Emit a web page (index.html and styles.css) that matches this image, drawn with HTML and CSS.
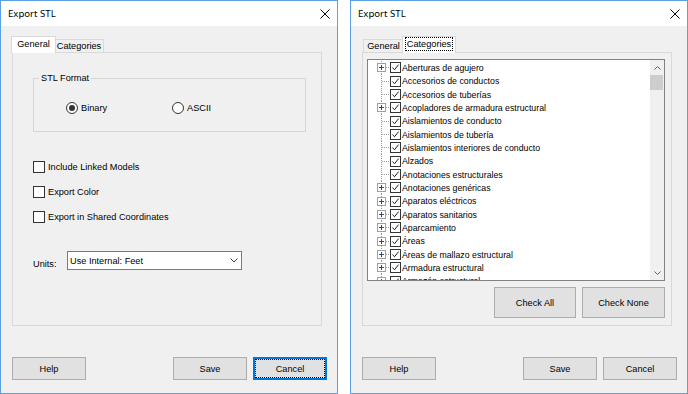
FILE: index.html
```html
<!DOCTYPE html>
<html>
<head>
<meta charset="utf-8">
<title>Export STL</title>
<link rel="stylesheet" href="styles.css">
</head>
<body>
<div class="desk">
  <div class="dialog">
    <div class="titlebar">
      <span class="title">Export STL</span>
      <svg class="close" width="10" height="10" viewBox="0 0 10 10"><path d="M0.5 0.5L9.5 9.5M9.5 0.5L0.5 9.5" stroke="#000" stroke-width="1" fill="none"/></svg>
    </div>
    <div class="body">
      <div class="tabs">
        <div class="tab tab-general active">General</div>
        <div class="tab tab-cat">Categories</div>
      </div>
      <div class="panel">
        <fieldset class="group">
          <legend>STL Format</legend>
          <div class="radios">
            <label class="radio"><span class="rb on"></span>Binary</label>
            <label class="radio"><span class="rb"></span>ASCII</label>
          </div>
        </fieldset>
        <div class="checks">
          <label class="check"><span class="cb"></span>Include Linked Models</label>
          <label class="check"><span class="cb"></span>Export Color</label>
          <label class="check"><span class="cb"></span>Export in Shared Coordinates</label>
        </div>
        <div class="units">
          <span class="units-label">Units:</span>
          <div class="select">
            <span>Use Internal: Feet</span>
            <svg class="chev" width="8" height="5" viewBox="0 0 8 5"><polyline points="0.5,0.5 4,4 7.5,0.5" stroke="#444" fill="none"/></svg>
          </div>
        </div>
      </div>
      <div class="buttons">
        <button class="btn btn-help">Help</button>
        <button class="btn">Save</button>
        <button class="btn default">Cancel</button>
      </div>
    </div>
  </div>

  <div class="dialog">
    <div class="titlebar">
      <span class="title">Export STL</span>
      <svg class="close" width="10" height="10" viewBox="0 0 10 10"><path d="M0.5 0.5L9.5 9.5M9.5 0.5L0.5 9.5" stroke="#000" stroke-width="1" fill="none"/></svg>
    </div>
    <div class="body">
      <div class="tabs">
        <div class="tab tab-general">General</div>
        <div class="tab tab-cat active"><span class="focus">Categories</span></div>
      </div>
      <div class="panel">
        <div class="list">
          <div class="tree">
            <div class="row"><span class="gutter"><svg class="exp" width="9" height="9" viewBox="0 0 9 9"><rect x="0.5" y="0.5" width="8" height="8" fill="#fff" stroke="#a0a0a0"/><path d="M2 4.5H7M4.5 2V7" stroke="#34458c"/></svg><span class="hline short"></span></span><svg class="tcb" width="11" height="11" viewBox="0 0 11 11"><rect x="0.5" y="0.5" width="10" height="10" fill="#fff" stroke="#333"/><polyline points="2.5,5.5 4.5,7.8 8.6,2.6" fill="none" stroke="#222"/></svg><span class="txt">Aberturas de agujero</span></div>
            <div class="row"><span class="gutter"><span class="hline"></span></span><svg class="tcb" width="11" height="11" viewBox="0 0 11 11"><rect x="0.5" y="0.5" width="10" height="10" fill="#fff" stroke="#333"/><polyline points="2.5,5.5 4.5,7.8 8.6,2.6" fill="none" stroke="#222"/></svg><span class="txt">Accesorios de conductos</span></div>
            <div class="row"><span class="gutter"><span class="hline"></span></span><svg class="tcb" width="11" height="11" viewBox="0 0 11 11"><rect x="0.5" y="0.5" width="10" height="10" fill="#fff" stroke="#333"/><polyline points="2.5,5.5 4.5,7.8 8.6,2.6" fill="none" stroke="#222"/></svg><span class="txt">Accesorios de tuberías</span></div>
            <div class="row"><span class="gutter"><svg class="exp" width="9" height="9" viewBox="0 0 9 9"><rect x="0.5" y="0.5" width="8" height="8" fill="#fff" stroke="#a0a0a0"/><path d="M2 4.5H7M4.5 2V7" stroke="#34458c"/></svg><span class="hline short"></span></span><svg class="tcb" width="11" height="11" viewBox="0 0 11 11"><rect x="0.5" y="0.5" width="10" height="10" fill="#fff" stroke="#333"/><polyline points="2.5,5.5 4.5,7.8 8.6,2.6" fill="none" stroke="#222"/></svg><span class="txt">Acopladores de armadura estructural</span></div>
            <div class="row"><span class="gutter"><span class="hline"></span></span><svg class="tcb" width="11" height="11" viewBox="0 0 11 11"><rect x="0.5" y="0.5" width="10" height="10" fill="#fff" stroke="#333"/><polyline points="2.5,5.5 4.5,7.8 8.6,2.6" fill="none" stroke="#222"/></svg><span class="txt">Aislamientos de conducto</span></div>
            <div class="row"><span class="gutter"><span class="hline"></span></span><svg class="tcb" width="11" height="11" viewBox="0 0 11 11"><rect x="0.5" y="0.5" width="10" height="10" fill="#fff" stroke="#333"/><polyline points="2.5,5.5 4.5,7.8 8.6,2.6" fill="none" stroke="#222"/></svg><span class="txt">Aislamientos de tubería</span></div>
            <div class="row"><span class="gutter"><span class="hline"></span></span><svg class="tcb" width="11" height="11" viewBox="0 0 11 11"><rect x="0.5" y="0.5" width="10" height="10" fill="#fff" stroke="#333"/><polyline points="2.5,5.5 4.5,7.8 8.6,2.6" fill="none" stroke="#222"/></svg><span class="txt">Aislamientos interiores de conducto</span></div>
            <div class="row"><span class="gutter"><span class="hline"></span></span><svg class="tcb" width="11" height="11" viewBox="0 0 11 11"><rect x="0.5" y="0.5" width="10" height="10" fill="#fff" stroke="#333"/><polyline points="2.5,5.5 4.5,7.8 8.6,2.6" fill="none" stroke="#222"/></svg><span class="txt">Alzados</span></div>
            <div class="row"><span class="gutter"><span class="hline"></span></span><svg class="tcb" width="11" height="11" viewBox="0 0 11 11"><rect x="0.5" y="0.5" width="10" height="10" fill="#fff" stroke="#333"/><polyline points="2.5,5.5 4.5,7.8 8.6,2.6" fill="none" stroke="#222"/></svg><span class="txt">Anotaciones estructurales</span></div>
            <div class="row"><span class="gutter"><svg class="exp" width="9" height="9" viewBox="0 0 9 9"><rect x="0.5" y="0.5" width="8" height="8" fill="#fff" stroke="#a0a0a0"/><path d="M2 4.5H7M4.5 2V7" stroke="#34458c"/></svg><span class="hline short"></span></span><svg class="tcb" width="11" height="11" viewBox="0 0 11 11"><rect x="0.5" y="0.5" width="10" height="10" fill="#fff" stroke="#333"/><polyline points="2.5,5.5 4.5,7.8 8.6,2.6" fill="none" stroke="#222"/></svg><span class="txt">Anotaciones genéricas</span></div>
            <div class="row"><span class="gutter"><svg class="exp" width="9" height="9" viewBox="0 0 9 9"><rect x="0.5" y="0.5" width="8" height="8" fill="#fff" stroke="#a0a0a0"/><path d="M2 4.5H7M4.5 2V7" stroke="#34458c"/></svg><span class="hline short"></span></span><svg class="tcb" width="11" height="11" viewBox="0 0 11 11"><rect x="0.5" y="0.5" width="10" height="10" fill="#fff" stroke="#333"/><polyline points="2.5,5.5 4.5,7.8 8.6,2.6" fill="none" stroke="#222"/></svg><span class="txt">Aparatos eléctricos</span></div>
            <div class="row"><span class="gutter"><svg class="exp" width="9" height="9" viewBox="0 0 9 9"><rect x="0.5" y="0.5" width="8" height="8" fill="#fff" stroke="#a0a0a0"/><path d="M2 4.5H7M4.5 2V7" stroke="#34458c"/></svg><span class="hline short"></span></span><svg class="tcb" width="11" height="11" viewBox="0 0 11 11"><rect x="0.5" y="0.5" width="10" height="10" fill="#fff" stroke="#333"/><polyline points="2.5,5.5 4.5,7.8 8.6,2.6" fill="none" stroke="#222"/></svg><span class="txt">Aparatos sanitarios</span></div>
            <div class="row"><span class="gutter"><svg class="exp" width="9" height="9" viewBox="0 0 9 9"><rect x="0.5" y="0.5" width="8" height="8" fill="#fff" stroke="#a0a0a0"/><path d="M2 4.5H7M4.5 2V7" stroke="#34458c"/></svg><span class="hline short"></span></span><svg class="tcb" width="11" height="11" viewBox="0 0 11 11"><rect x="0.5" y="0.5" width="10" height="10" fill="#fff" stroke="#333"/><polyline points="2.5,5.5 4.5,7.8 8.6,2.6" fill="none" stroke="#222"/></svg><span class="txt">Aparcamiento</span></div>
            <div class="row"><span class="gutter"><svg class="exp" width="9" height="9" viewBox="0 0 9 9"><rect x="0.5" y="0.5" width="8" height="8" fill="#fff" stroke="#a0a0a0"/><path d="M2 4.5H7M4.5 2V7" stroke="#34458c"/></svg><span class="hline short"></span></span><svg class="tcb" width="11" height="11" viewBox="0 0 11 11"><rect x="0.5" y="0.5" width="10" height="10" fill="#fff" stroke="#333"/><polyline points="2.5,5.5 4.5,7.8 8.6,2.6" fill="none" stroke="#222"/></svg><span class="txt">Áreas</span></div>
            <div class="row"><span class="gutter"><svg class="exp" width="9" height="9" viewBox="0 0 9 9"><rect x="0.5" y="0.5" width="8" height="8" fill="#fff" stroke="#a0a0a0"/><path d="M2 4.5H7M4.5 2V7" stroke="#34458c"/></svg><span class="hline short"></span></span><svg class="tcb" width="11" height="11" viewBox="0 0 11 11"><rect x="0.5" y="0.5" width="10" height="10" fill="#fff" stroke="#333"/><polyline points="2.5,5.5 4.5,7.8 8.6,2.6" fill="none" stroke="#222"/></svg><span class="txt">Áreas de mallazo estructural</span></div>
            <div class="row"><span class="gutter"><svg class="exp" width="9" height="9" viewBox="0 0 9 9"><rect x="0.5" y="0.5" width="8" height="8" fill="#fff" stroke="#a0a0a0"/><path d="M2 4.5H7M4.5 2V7" stroke="#34458c"/></svg><span class="hline short"></span></span><svg class="tcb" width="11" height="11" viewBox="0 0 11 11"><rect x="0.5" y="0.5" width="10" height="10" fill="#fff" stroke="#333"/><polyline points="2.5,5.5 4.5,7.8 8.6,2.6" fill="none" stroke="#222"/></svg><span class="txt">Armadura estructural</span></div>
            <div class="row"><span class="gutter"><svg class="exp" width="9" height="9" viewBox="0 0 9 9"><rect x="0.5" y="0.5" width="8" height="8" fill="#fff" stroke="#a0a0a0"/><path d="M2 4.5H7M4.5 2V7" stroke="#34458c"/></svg><span class="hline short"></span></span><svg class="tcb" width="11" height="11" viewBox="0 0 11 11"><rect x="0.5" y="0.5" width="10" height="10" fill="#fff" stroke="#333"/><polyline points="2.5,5.5 4.5,7.8 8.6,2.6" fill="none" stroke="#222"/></svg><span class="txt">Armazón estructural</span></div>
          </div>
          <div class="scrollbar">
            <div class="sb-btn"><svg width="7" height="4" viewBox="0 0 7 4"><polyline points="0.5,3.5 3.5,0.5 6.5,3.5" fill="none" stroke="#606060"/></svg></div>
            <div class="thumb"></div>
            <div class="sb-space"></div>
            <div class="sb-btn"><svg width="7" height="4" viewBox="0 0 7 4"><polyline points="0.5,0.5 3.5,3.5 6.5,0.5" fill="none" stroke="#606060"/></svg></div>
          </div>
        </div>
        <div class="check-btns">
          <button class="btn btn-ca">Check All</button>
          <button class="btn btn-cn">Check None</button>
        </div>
      </div>
      <div class="buttons">
        <button class="btn btn-help">Help</button>
        <button class="btn">Save</button>
        <button class="btn">Cancel</button>
      </div>
    </div>
  </div>
</div>
</body>
</html>
```
FILE: styles.css
```css
* { box-sizing: border-box; }
html, body { margin: 0; padding: 0; background: #fff; }
body {
  font-family: "Liberation Sans", Arial, sans-serif;
  font-size: 9.2px;
  color: #000;
}
.desk { display: flex; gap: 12px; width: 688px; height: 394px; }

.dialog {
  width: 338px;
  height: 394px;
  border: 1px solid #5c9fe3;
  background: #f0f0f0;
  display: flex;
  flex-direction: column;
  flex: none;
}
.titlebar {
  height: 25px;
  flex: none;
  background: #fff;
  display: flex;
  align-items: center;
  padding-left: 7px;
}
.title { font-family: "Noto Sans", "Liberation Sans", sans-serif; font-size: 9.6px; }
.close { margin-left: auto; margin-right: 7px; display: block; }

.body { flex: 1; display: flex; flex-direction: column; padding-top: 10px; }

.tabs {
  height: 16px;
  flex: none;
  margin-left: 12px;
  display: flex;
  align-items: flex-end;
  position: relative;
  z-index: 1;
}
.tab {
  height: 13px;
  border: 1px solid #d9d9d9;
  border-bottom: 0;
  background: #f0f0f0;
  display: flex;
  align-items: center;
  justify-content: center;
  line-height: 11px;
  white-space: nowrap;
}
.tab-general { width: 41px; }
.tab-cat { width: 50px; }
.tab.active {
  height: 17px;
  margin: 0 -2px -1px;
  background: #fff;
  position: relative;
  z-index: 2;
  padding-bottom: 2px;
}
.tab-general.active { width: 45px; }
.tab-cat.active { width: 54px; }
.focus { outline: 1px dotted #000; outline-offset: 1px; line-height: 10px; }

.panel {
  height: 274px;
  flex: none;
  margin: 0 15px 0 11px;
  border: 1px solid #d9d9d9;
  background: #f0f0f0;
}

.group {
  margin: 19px 15px 0 20px;
  padding: 0;
  height: 60px;
  min-width: 0;
  border: 1px solid #d5d5d5;
}
.group legend {
  margin-left: 5px;
  padding: 0 2px;
  line-height: 13px;
}
.radios { display: flex; padding-left: 32px; margin-top: 17px; }
.radio { display: flex; align-items: center; width: 106px; height: 12px; }
.rb {
  width: 12px; height: 12px;
  border: 1px solid #333;
  border-radius: 50%;
  background: #fff;
  margin-right: 3px;
  display: flex; align-items: center; justify-content: center;
}
.rb.on::after { content: ""; width: 6px; height: 6px; border-radius: 50%; background: #333; }

.checks { margin: 29px 0 0 20px; display: flex; flex-direction: column; gap: 13px; }
.check { display: flex; align-items: center; height: 12px; }
.cb { width: 12px; height: 12px; border: 1px solid #333; background: #fff; margin-right: 3px; }

.units { display: flex; align-items: flex-end; margin: 28px 0 0 20px; }
.units-label { width: 34px; line-height: 11px; }
.select {
  width: 175px; height: 19px;
  border: 1px solid #7a7a7a;
  background: #fff;
  display: flex; align-items: center;
  padding-left: 2px;
}
.chev { margin-left: auto; margin-right: 3px; display: block; }

.buttons { display: flex; gap: 6px; margin: 31px 10px 0 11px; height: 23px; flex: none; }
.btn {
  width: 74px; height: 23px;
  border: 1px solid #adadad;
  background: #e1e1e1;
  font: inherit;
  color: #000;
  padding: 0;
}
.btn-help { margin-right: auto; }
.btn.default {
  border-color: #0078d7;
  box-shadow: inset 0 0 0 1px #0078d7;
  outline: 1px dotted #000;
  outline-offset: -3px;
}

.list {
  margin: 6px 6px 0 4px;
  height: 222px;
  border: 1px solid #828282;
  background: #fff;
  display: flex;
}
.tree { flex: 1; padding-top: 1px; overflow: hidden; }
.row { display: flex; align-items: center; height: 13px; white-space: nowrap; }
.row:nth-child(3n+2) { height: 14px; }
.gutter {
  width: 22px;
  align-self: stretch;
  display: flex;
  align-items: center;
  background: linear-gradient(#a0a0a0 50%, transparent 50%) 13px 0 / 1px 2px repeat-y;
  flex: none;
}
.hline {
  height: 1px;
  width: 8px;
  margin-left: 14px;
  background: linear-gradient(90deg, #a0a0a0 50%, transparent 50%) 0 0 / 2px 1px repeat-x;
}
.hline.short { width: 4px; margin-left: 0; }
.exp { margin-left: 9px; display: block; flex: none; }
.tcb { display: block; flex: none; }
.txt { margin-left: 1px; line-height: 12px; font-size: 8.75px; }

.scrollbar { width: 14px; background: #f0f0f0; display: flex; flex-direction: column; flex: none; }
.sb-btn { height: 15px; display: flex; align-items: center; justify-content: center; flex: none; }
.sb-btn svg { display: block; }
.thumb { height: 15px; margin-right: 1px; background: #cdcdcd; flex: none; }
.sb-space { flex: 1; }

.check-btns { display: flex; justify-content: flex-end; gap: 6px; margin: 6px 6px 0 0; }
.btn-ca { width: 82px; height: 31px; }
.btn-cn { width: 83px; height: 31px; }
```
